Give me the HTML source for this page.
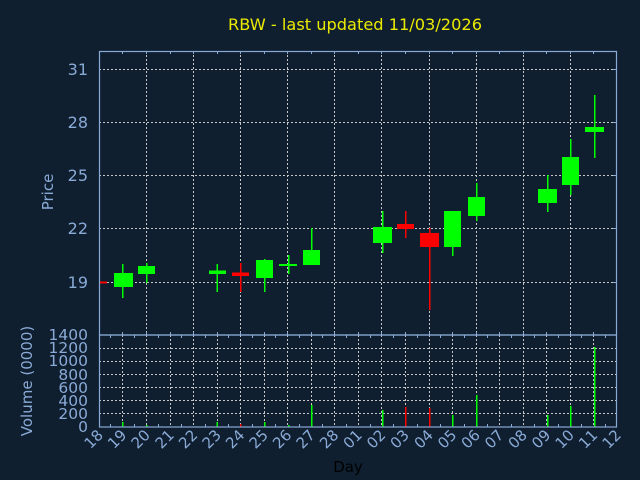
<!DOCTYPE html>
<html><head><meta charset="utf-8"><style>
html,body{margin:0;padding:0;background:#0f1f30;}
svg{display:block}
text{font-family:"DejaVu Sans","Liberation Sans",sans-serif;}
</style></head><body>
<svg width="640" height="480" viewBox="0 0 640 480" xmlns="http://www.w3.org/2000/svg">
<rect width="640" height="480" fill="#0f1f30"/>
<text x="355" y="30" fill="#eaea00" font-size="16.2" text-anchor="middle">RBW - last updated 11/03/2026</text>

<!-- price grid -->
<g stroke="#c8c8c8" stroke-width="1" stroke-dasharray="2,2">
<line x1="99" y1="69.5" x2="617" y2="69.5"/>
<line x1="99" y1="122.5" x2="617" y2="122.5"/>
<line x1="99" y1="175.5" x2="617" y2="175.5"/>
<line x1="99" y1="228.5" x2="617" y2="228.5"/>
<line x1="99" y1="282.5" x2="617" y2="282.5"/>
<line x1="146.5" y1="51" x2="146.5" y2="335"/>
<line x1="193.5" y1="51" x2="193.5" y2="335"/>
<line x1="240.5" y1="51" x2="240.5" y2="335"/>
<line x1="287.5" y1="51" x2="287.5" y2="335"/>
<line x1="334.5" y1="51" x2="334.5" y2="335"/>
<line x1="381.5" y1="51" x2="381.5" y2="335"/>
<line x1="429.5" y1="51" x2="429.5" y2="335"/>
<line x1="476.5" y1="51" x2="476.5" y2="335"/>
<line x1="523.5" y1="51" x2="523.5" y2="335"/>
<line x1="570.5" y1="51" x2="570.5" y2="335"/>
</g>
<!-- volume grid -->
<g stroke="#c8c8c8" stroke-width="1" stroke-dasharray="2,2">
<line x1="99" y1="348.5" x2="617" y2="348.5"/>
<line x1="99" y1="361.5" x2="617" y2="361.5"/>
<line x1="99" y1="374.5" x2="617" y2="374.5"/>
<line x1="99" y1="387.5" x2="617" y2="387.5"/>
<line x1="99" y1="400.5" x2="617" y2="400.5"/>
<line x1="99" y1="413.5" x2="617" y2="413.5"/>
<line x1="122.5" y1="335" x2="122.5" y2="427"/><line x1="146.5" y1="335" x2="146.5" y2="427"/>
<line x1="170.5" y1="335" x2="170.5" y2="427"/><line x1="193.5" y1="335" x2="193.5" y2="427"/>
<line x1="217.5" y1="335" x2="217.5" y2="427"/><line x1="240.5" y1="335" x2="240.5" y2="427"/>
<line x1="264.5" y1="335" x2="264.5" y2="427"/><line x1="287.5" y1="335" x2="287.5" y2="427"/>
<line x1="311.5" y1="335" x2="311.5" y2="427"/><line x1="334.5" y1="335" x2="334.5" y2="427"/>
<line x1="358.5" y1="335" x2="358.5" y2="427"/><line x1="381.5" y1="335" x2="381.5" y2="427"/>
<line x1="405.5" y1="335" x2="405.5" y2="427"/><line x1="429.5" y1="335" x2="429.5" y2="427"/>
<line x1="452.5" y1="335" x2="452.5" y2="427"/><line x1="476.5" y1="335" x2="476.5" y2="427"/>
<line x1="499.5" y1="335" x2="499.5" y2="427"/><line x1="523.5" y1="335" x2="523.5" y2="427"/>
<line x1="546.5" y1="335" x2="546.5" y2="427"/><line x1="570.5" y1="335" x2="570.5" y2="427"/>
<line x1="593.5" y1="335" x2="593.5" y2="427"/>
</g>

<!-- candles -->
<g fill="#00ff00" stroke="none">
<rect x="99" y="281.5" width="8" height="2" fill="#ff0000"/>
<rect x="122" y="264" width="1.5" height="34"/><rect x="114" y="273" width="19" height="14"/>
<rect x="146" y="263" width="1.5" height="20"/><rect x="138" y="266" width="17" height="8"/>
<rect x="216.5" y="264" width="1.5" height="28"/><rect x="209" y="270.5" width="17" height="3.5"/>
<rect x="240" y="263" width="1.5" height="29" fill="#ff0000"/><rect x="232" y="272.5" width="17" height="3.5" fill="#ff0000"/>
<rect x="264" y="259" width="1.5" height="33"/><rect x="256" y="260" width="17" height="18"/>
<rect x="288" y="255" width="1.5" height="19"/><rect x="279" y="264" width="18" height="2"/>
<rect x="311" y="228" width="1.5" height="37"/><rect x="303" y="250" width="17" height="15"/>
<rect x="382" y="211" width="1.5" height="42"/><rect x="373" y="227" width="19" height="16"/>
<rect x="405" y="211" width="1.5" height="27" fill="#ff0000"/><rect x="397" y="224" width="17" height="5" fill="#ff0000"/>
<rect x="429" y="228" width="1.5" height="82" fill="#ff0000"/><rect x="420" y="233" width="19" height="14" fill="#ff0000"/>
<rect x="452" y="211" width="1.5" height="45"/><rect x="444" y="211" width="17" height="36"/>
<rect x="476" y="183" width="1.5" height="38"/><rect x="468" y="197" width="17" height="19"/>
<rect x="547" y="175" width="1.5" height="37"/><rect x="538" y="189" width="19" height="14"/>
<rect x="570" y="139" width="1.5" height="56"/><rect x="562" y="157" width="17" height="28"/>
<rect x="594" y="95" width="1.5" height="63"/><rect x="585" y="127" width="19" height="5"/>
</g>
<!-- volume bars -->
<g fill="#00ff00">
<rect x="122" y="422" width="1.5" height="5"/>
<rect x="146" y="425" width="1.5" height="2"/>
<rect x="216.5" y="422" width="1.5" height="5"/>
<rect x="240" y="424" width="1.5" height="3" fill="#ff0000"/>
<rect x="264" y="422" width="1.5" height="5"/>
<rect x="288" y="425" width="1.5" height="2"/>
<rect x="311" y="405" width="1.5" height="22"/>
<rect x="382" y="410" width="1.5" height="17"/>
<rect x="405" y="407" width="1.5" height="20" fill="#ff0000"/>
<rect x="429" y="408" width="1.5" height="19" fill="#ff0000"/>
<rect x="452" y="415" width="1.5" height="12"/>
<rect x="476" y="395" width="1.5" height="32"/>
<rect x="547" y="415" width="1.5" height="12"/>
<rect x="570" y="406" width="1.5" height="21"/>
<rect x="594" y="347" width="1.5" height="80"/>
</g>

<!-- frames -->
<g stroke="#8aaad6" stroke-width="1.2" fill="none">
<rect x="99.5" y="51.5" width="517" height="283.5"/>
<rect x="99.5" y="335" width="517" height="92"/>
</g>
<!-- ticks -->
<g stroke="#8aaad6" stroke-width="1">
<path d="M122.5 51v3M146.5 51v3M170.5 51v3M193.5 51v3M217.5 51v3M240.5 51v3M264.5 51v3M287.5 51v3M311.5 51v3M334.5 51v3M358.5 51v3M381.5 51v3M405.5 51v3M429.5 51v3M452.5 51v3M476.5 51v3M499.5 51v3M523.5 51v3M546.5 51v3M570.5 51v3M593.5 51v3"/>
<path d="M122.5 335v-3M146.5 335v-3M170.5 335v-3M193.5 335v-3M217.5 335v-3M240.5 335v-3M264.5 335v-3M287.5 335v-3M311.5 335v-3M334.5 335v-3M358.5 335v-3M381.5 335v-3M405.5 335v-3M429.5 335v-3M452.5 335v-3M476.5 335v-3M499.5 335v-3M523.5 335v-3M546.5 335v-3M570.5 335v-3M593.5 335v-3"/>
<path d="M110.5 335v3M134.5 335v3M158.5 335v3M181.5 335v3M205.5 335v3M228.5 335v3M252.5 335v3M275.5 335v3M299.5 335v3M322.5 335v3M346.5 335v3M370.5 335v3M393.5 335v3M417.5 335v3M440.5 335v3M464.5 335v3M487.5 335v3M511.5 335v3M534.5 335v3M558.5 335v3M581.5 335v3M605.5 335v3"/>
<path d="M110.5 427v-3M134.5 427v-3M158.5 427v-3M181.5 427v-3M205.5 427v-3M228.5 427v-3M252.5 427v-3M275.5 427v-3M299.5 427v-3M322.5 427v-3M346.5 427v-3M370.5 427v-3M393.5 427v-3M417.5 427v-3M440.5 427v-3M464.5 427v-3M487.5 427v-3M511.5 427v-3M534.5 427v-3M558.5 427v-3M581.5 427v-3M605.5 427v-3"/>
<path d="M613 69.5h4M613 122.5h4M613 175.5h4M613 228.5h4M613 282.5h4"/>
</g>

<!-- y labels -->
<g fill="#8aaad6" font-size="16" text-anchor="end">
<text x="88" y="75">31</text>
<text x="88" y="128">28</text>
<text x="88" y="181">25</text>
<text x="88" y="234">22</text>
<text x="88" y="288">19</text>
</g>
<g fill="#8aaad6" font-size="15.5" text-anchor="end">
<text x="88" y="340">1400</text>
<text x="88" y="353">1200</text>
<text x="88" y="366">1000</text>
<text x="88" y="380">800</text>
<text x="88" y="393">600</text>
<text x="88" y="406">400</text>
<text x="88" y="419">200</text>
<text x="88" y="432">0</text>
</g>
<text transform="translate(53,192) rotate(-90)" fill="#8aaad6" font-size="15" text-anchor="middle">Price</text>
<text transform="translate(32,381) rotate(-90)" fill="#8aaad6" font-size="15" text-anchor="middle">Volume (0000)</text>

<!-- x labels -->
<g fill="#8aaad6" font-size="15" text-anchor="end">
<text transform="translate(104,436) rotate(-45)">18</text>
<text transform="translate(127.5,436) rotate(-45)">19</text>
<text transform="translate(151,436) rotate(-45)">20</text>
<text transform="translate(175,436) rotate(-45)">21</text>
<text transform="translate(198.5,436) rotate(-45)">22</text>
<text transform="translate(222,436) rotate(-45)">23</text>
<text transform="translate(245.5,436) rotate(-45)">24</text>
<text transform="translate(269,436) rotate(-45)">25</text>
<text transform="translate(292.5,436) rotate(-45)">26</text>
<text transform="translate(316,436) rotate(-45)">27</text>
<text transform="translate(339.5,436) rotate(-45)">28</text>
<text transform="translate(363,436) rotate(-45)">01</text>
<text transform="translate(386.5,436) rotate(-45)">02</text>
<text transform="translate(410,436) rotate(-45)">03</text>
<text transform="translate(434,436) rotate(-45)">04</text>
<text transform="translate(457.5,436) rotate(-45)">05</text>
<text transform="translate(481,436) rotate(-45)">06</text>
<text transform="translate(504.5,436) rotate(-45)">07</text>
<text transform="translate(528,436) rotate(-45)">08</text>
<text transform="translate(551.5,436) rotate(-45)">09</text>
<text transform="translate(575,436) rotate(-45)">10</text>
<text transform="translate(598.5,436) rotate(-45)">11</text>
<text transform="translate(622,436) rotate(-45)">12</text>
</g>
<text x="348" y="472" fill="#000000" font-size="15" text-anchor="middle">Day</text>
</svg>
</body></html>
